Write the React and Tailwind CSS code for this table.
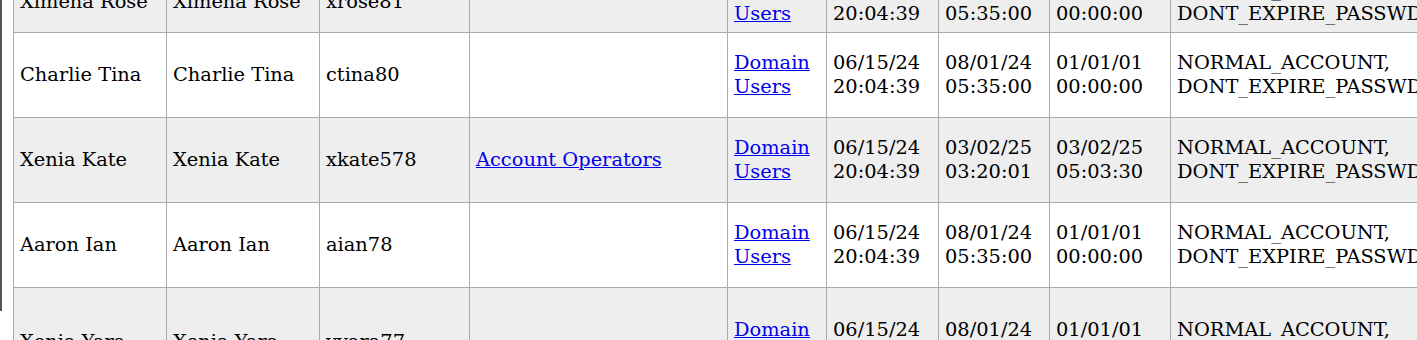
import React from 'react';

const users = [
  {
    name: 'Ximena Rose',
    display: 'Ximena Rose',
    sam: 'xrose81',
    groups: [],
    created: ['06/15/24', '20:04:39'],
    changed: ['08/01/24', '05:35:00'],
    logon: ['01/01/01', '00:00:00'],
    flags: ['NORMAL_ACCOUNT', 'DONT_EXPIRE_PASSWD'],
    spn: ['-']
  },
  {
    name: 'Charlie Tina',
    display: 'Charlie Tina',
    sam: 'ctina80',
    groups: [],
    created: ['06/15/24', '20:04:39'],
    changed: ['08/01/24', '05:35:00'],
    logon: ['01/01/01', '00:00:00'],
    flags: ['NORMAL_ACCOUNT', 'DONT_EXPIRE_PASSWD'],
    spn: ['S-1-5-21-3167813660-', '1240564177-', '918740779-1116']
  },
  {
    name: 'Xenia Kate',
    display: 'Xenia Kate',
    sam: 'xkate578',
    groups: ['Account Operators'],
    created: ['06/15/24', '20:04:39'],
    changed: ['03/02/25', '03:20:01'],
    logon: ['03/02/25', '05:03:30'],
    flags: ['NORMAL_ACCOUNT', 'DONT_EXPIRE_PASSWD'],
    spn: ['S-1-5-21-3167813660-', '1240564177-', '918740779-1117']
  },
  {
    name: 'Aaron Ian',
    display: 'Aaron Ian',
    sam: 'aian78',
    groups: [],
    created: ['06/15/24', '20:04:39'],
    changed: ['08/01/24', '05:35:00'],
    logon: ['01/01/01', '00:00:00'],
    flags: ['NORMAL_ACCOUNT', 'DONT_EXPIRE_PASSWD'],
    spn: ['S-1-5-21-3167813660-', '1240564177-', '918740779-1118']
  },
  {
    name: 'Xenia Yara',
    display: 'Xenia Yara',
    sam: 'yyara77',
    groups: [],
    created: ['06/15/24', '20:04:39'],
    changed: ['08/01/24', '05:35:00'],
    logon: ['01/01/01', '00:00:00'],
    flags: ['NORMAL_ACCOUNT', 'DONT_EXPIRE_PASSWD'],
    spn: ['Shared account for', 'the helpdesk team,', 'please do not', 'remove']
  }
];

const cell = 'border border-[#aaaaaa] px-[6px] py-[6px] align-middle';

const Lines = ({ lines }) => (
  <>
    {lines.map((l, i) => (
      <div key={i}>{l}</div>
    ))}
  </>
);

const App = () => {
  return (
    <div className="h-[340px] overflow-hidden bg-white font-['DejaVu_Serif',serif] text-[19.4px] leading-6 text-black">
      <div className="h-full border-l-2 border-[#555555] pl-[11px]">
        <table className="mt-[-29px] table-fixed border-collapse w-[1677px]">
          <colgroup>
            <col className="w-[153px]" />
            <col className="w-[153px]" />
            <col className="w-[150px]" />
            <col className="w-[258px]" />
            <col className="w-[99px]" />
            <col className="w-[112px]" />
            <col className="w-[111px]" />
            <col className="w-[121px]" />
            <col className="w-[300px]" />
            <col className="w-[220px]" />
          </colgroup>
          <tbody>
            {users.map((u, i) => (
              <tr key={u.sam} className={i % 2 === 0 ? 'bg-[#eeeeee]' : 'bg-white'}>
                <td className={cell}>{u.name}</td>
                <td className={cell}>{u.display}</td>
                <td className={cell}>{u.sam}</td>
                <td className={cell}>
                  {u.groups.map((g) => (
                    <a key={g} href="#" className="text-[#0000ee] underline">
                      {g}
                    </a>
                  ))}
                </td>
                <td className={cell}>
                  <a href="#" className="text-[#0000ee] underline">
                    Domain Users
                  </a>
                </td>
                <td className={cell}>
                  <Lines lines={u.created} />
                </td>
                <td className={cell}>
                  <Lines lines={u.changed} />
                </td>
                <td className={cell}>
                  <Lines lines={u.logon} />
                </td>
                <td className={cell + ' whitespace-nowrap'}>
                  {u.flags.map((f, j) => (
                    <div key={f}>
                      {f}
                      {j < u.flags.length - 1 ? ',' : ''}
                    </div>
                  ))}
                </td>
                <td className={cell + ' whitespace-nowrap'}>
                  <Lines lines={u.spn} />
                </td>
              </tr>
            ))}
          </tbody>
        </table>
      </div>
    </div>
  );
};

export default App;
